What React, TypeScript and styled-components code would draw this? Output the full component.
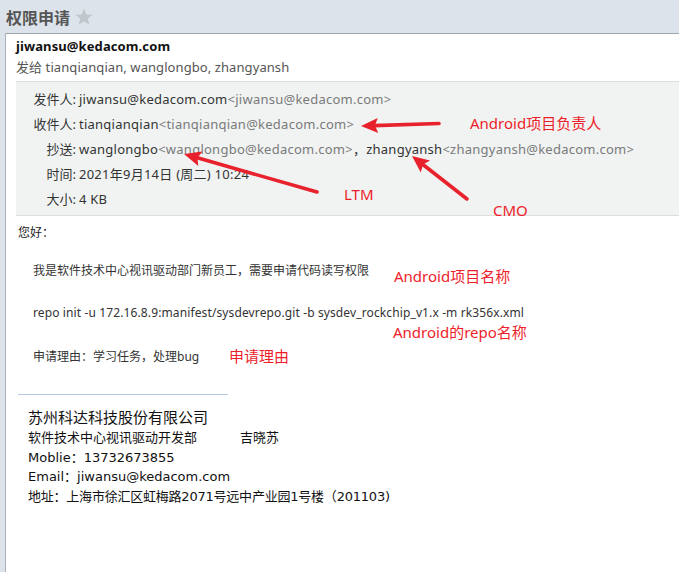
import React from "react";
import styled, { createGlobalStyle } from "styled-components";

const GlobalStyle = createGlobalStyle`
  html, body { margin: 0; padding: 0; }
  body {
    background: #dce3ea;
    font-family: "Noto Sans", "Noto Sans CJK SC", sans-serif;
    overflow: hidden;
  }
`;

const Page = styled.div`
  position: relative;
  width: 679px;
  height: 572px;
  display: flex;
  flex-direction: column;
  background: #dce3ea;
`;

const TitleBar = styled.div`
  height: 33px;
  display: flex;
  align-items: center;
  gap: 5px;
  padding-left: 6px;
`;

const Title = styled.h1`
  margin: 0;
  font-size: 16px;
  font-weight: 700;
  color: #555;
  font-family: "Noto Sans CJK SC", sans-serif;
  line-height: 1;
`;

const Card = styled.div`
  flex: 1;
  margin-left: 5px;
  background: #fff;
  border-left: 1px solid #a9b0b8;
  border-top: 1px solid #9ea5ac;
`;

const SenderBlock = styled.div`
  padding: 2px 0 0 10px;
`;

const SenderName = styled.div`
  font-size: 13px;
  font-weight: 700;
  line-height: 21px;
  color: #111;
  letter-spacing: 0.1px;
`;

const SentTo = styled.div`
  font-size: 13px;
  line-height: 21px;
  color: #555;
  letter-spacing: 0.08px;
`;

const InfoBox = styled.div`
  margin: 3px 0 0 10px;
  padding: 4px 0 4px 0;
  background: #f0f3f2;
  border-top: 1px solid #dcdedd;
  border-bottom: 1px solid #dcdedd;
  display: grid;
  grid-template-columns: 60px 1fr;
  grid-auto-rows: 25px;
  align-items: center;
  font-size: 13px;
  color: #333;
`;

const Label = styled.span`
  text-align: right;
  white-space: nowrap;
`;

const Value = styled.span`
  padding-left: 3px;
  white-space: nowrap;
  letter-spacing: 0.25px;
`;

const Addr = styled.span`
  color: #7a7a7a;
`;

const Body = styled.div`
  padding: 8px 0 0 12px;
  font-size: 12px;
  color: #222;
`;

const Greeting = styled.div`
  line-height: 18px;
`;

const Para = styled.div<{ $top: number; $spacing?: number }>`
  padding-left: 15px;
  margin-top: ${(p) => p.$top}px;
  line-height: 18px;
  color: #333;
  letter-spacing: ${(p) => p.$spacing ?? 0}px;
  white-space: nowrap;
`;

const Separator = styled.div`
  margin-top: 28px;
  width: 210px;
  height: 1px;
  background: #b7c8e2;
`;

const Signature = styled.div`
  padding: 13px 0 0 22px;
  font-family: "DejaVu Sans", "Noto Sans CJK SC", sans-serif;
  font-size: 13px;
  color: #111;
`;

const SigLine = styled.div<{ $big?: boolean; $tight?: boolean }>`
  line-height: ${(p) => (p.$big ? "20px" : "19.5px")};
  font-size: ${(p) => (p.$big ? "15px" : "13px")};
  letter-spacing: ${(p) => (p.$tight ? "-0.22px" : "0")};
  white-space: nowrap;
`;

const SigName = styled.span`
  margin-left: 43px;
`;

const Note = styled.span<{ $x: number; $y: number }>`
  position: absolute;
  left: ${(p) => p.$x}px;
  top: ${(p) => p.$y}px;
  font-size: 15px;
  line-height: 18px;
  color: #ee1d2a;
  white-space: nowrap;
  font-family: "Noto Sans", "Noto Sans CJK SC", sans-serif;
`;

const Overlay = styled.svg`
  position: absolute;
  left: 0;
  top: 0;
  pointer-events: none;
`;

function Arrow({ x1, y1, x2, y2 }: { x1: number; y1: number; x2: number; y2: number }) {
  const dx = x2 - x1;
  const dy = y2 - y1;
  const len = Math.hypot(dx, dy);
  const ux = dx / len;
  const uy = dy / len;
  const hl = 17;
  const hw = 7.5;
  const bx = x2 - ux * hl;
  const by = y2 - uy * hl;
  const px = -uy;
  const py = ux;
  const pts = `${x2},${y2} ${bx + px * hw},${by + py * hw} ${bx + ux * 3},${by + uy * 3} ${bx - px * hw},${by - py * hw}`;
  return (
    <g>
      <line x1={x1} y1={y1} x2={bx + ux * 4} y2={by + uy * 4} stroke="#e8222c" strokeWidth={3.6} strokeLinecap="round" />
      <polygon points={pts} fill="#e8222c" />
    </g>
  );
}

const Star = () => (
  <svg width="18" height="18" viewBox="0 0 24 24">
    <polygon
      points="12,1 15.1,8.7 23.3,9.1 16.9,14.3 19.1,22.4 12,17.8 4.9,22.4 7.1,14.3 0.7,9.1 8.9,8.7"
      fill="#c1c6cb"
    />
  </svg>
);

export default function App() {
  return (
    <>
      <GlobalStyle />
      <Page>
        <TitleBar>
          <Title>权限申请</Title>
          <Star />
        </TitleBar>
        <Card>
          <SenderBlock>
            <SenderName>jiwansu@kedacom.com</SenderName>
            <SentTo>发给 tianqianqian, wanglongbo, zhangyansh</SentTo>
          </SenderBlock>
          <InfoBox>
            <Label>发件人:</Label>
            <Value>
              jiwansu@kedacom.com<Addr>&lt;jiwansu@kedacom.com&gt;</Addr>
            </Value>
            <Label>收件人:</Label>
            <Value>
              tianqianqian<Addr>&lt;tianqianqian@kedacom.com&gt;</Addr>
            </Value>
            <Label>抄送:</Label>
            <Value>
              wanglongbo<Addr>&lt;wanglongbo@kedacom.com&gt;</Addr>，zhangyansh
              <Addr>&lt;zhangyansh@kedacom.com&gt;</Addr>
            </Value>
            <Label>时间:</Label>
            <Value>2021年9月14日 (周二) 10:24</Value>
            <Label>大小:</Label>
            <Value>4 KB</Value>
          </InfoBox>
          <Body>
            <Greeting>您好：</Greeting>
            <Para $top={20}>我是软件技术中心视讯驱动部门新员工，需要申请代码读写权限</Para>
            <Para $top={24} $spacing={0.12}>
              repo init -u 172.16.8.9:manifest/sysdevrepo.git -b sysdev_rockchip_v1.x -m rk356x.xml
            </Para>
            <Para $top={26}>申请理由：学习任务，处理bug</Para>
            <Separator />
          </Body>
          <Signature>
            <SigLine $big>苏州科达科技股份有限公司</SigLine>
            <SigLine>
              软件技术中心视讯驱动开发部<SigName>吉晓苏</SigName>
            </SigLine>
            <SigLine>Moblie：13732673855</SigLine>
            <SigLine>Email：jiwansu@kedacom.com</SigLine>
            <SigLine $tight>地址：上海市徐汇区虹梅路2071号远中产业园1号楼（201103)</SigLine>
          </Signature>
        </Card>
        <Note $x={470} $y={114}>Android项目负责人</Note>
        <Note $x={344} $y={185}>LTM</Note>
        <Note $x={493} $y={201}>CMO</Note>
        <Note $x={394} $y={267}>Android项目名称</Note>
        <Note $x={393} $y={323}>Android的repo名称</Note>
        <Note $x={229} $y={347}>申请理由</Note>
        <Overlay width={679} height={572}>
          <Arrow x1={439} y1={123.5} x2={361} y2={126} />
          <Arrow x1={317} y1={192} x2={184} y2={154} />
          <Arrow x1={467} y1={199} x2={412} y2={156} />
        </Overlay>
      </Page>
    </>
  );
}
